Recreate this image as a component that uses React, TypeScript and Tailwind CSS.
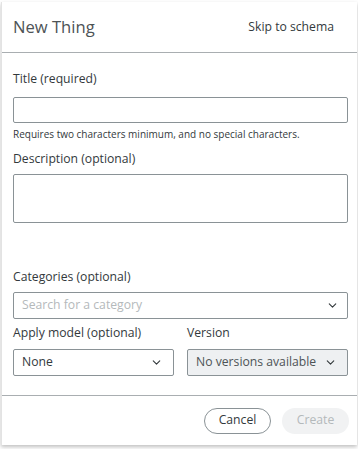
import { ChevronDown } from 'lucide-react';

const inputBox = 'w-full border border-[#8a9296] rounded-[2px] bg-white';

function Label({ children }: { children: React.ReactNode }) {
  return <div className="text-[12.2px] leading-[18px] text-[#33393c]">{children}</div>;
}

export default function App() {
  return (
    <div className="w-[358px] h-[449px] bg-white" style={{ fontFamily: '"Open Sans", "Noto Sans", sans-serif' }}>
      <div className="ml-[1px] mt-[2px] w-[356px] h-[443px] bg-white flex flex-col shadow-[0_2px_4px_rgba(0,0,0,0.25)] border-l border-[#e3e3e3]">
        <div className="h-[51px] flex items-center justify-between pl-[11px] pr-[23px] border-b border-[#a9aeb1]">
          <h1 className="text-[16.6px] text-[#4d5356]">New Thing</h1>
          <button className="text-[12.2px] text-[#33393c]">Skip to schema</button>
        </div>

        <div className="flex-1 pl-[11px] pr-[9px] pt-[17px]">
          <Label>Title (required)</Label>
          <div className={`${inputBox} h-[26px] mt-[9px]`} />
          <div className="text-[10px] leading-[14px] text-[#33393c] mt-[4px]">
            Requires two characters minimum, and no special characters.
          </div>

          <div className="mt-[9px]">
            <Label>Description (optional)</Label>
          </div>
          <div className={`${inputBox} h-[49px] mt-[6px]`} />

          <div className="mt-[45px]">
            <Label>Categories (optional)</Label>
          </div>
          <div className={`${inputBox} h-[27px] mt-[6px] flex items-center justify-between pl-[8px] pr-[8px]`}>
            <span className="text-[12.2px] text-[#b4b9bb]">Search for a category</span>
            <ChevronDown size={13} strokeWidth={2} className="text-[#33393c]" />
          </div>

          <div className="grid grid-cols-2 gap-[13px] mt-[5px]">
            <div>
              <Label>Apply model (optional)</Label>
              <div className={`${inputBox} h-[27px] mt-[7px] flex items-center justify-between pl-[8px] pr-[10px]`}>
                <span className="text-[12.2px] text-[#33393c]">None</span>
                <ChevronDown size={13} strokeWidth={2} className="text-[#33393c]" />
              </div>
            </div>
            <div>
              <Label>Version</Label>
              <div className="w-full border border-[#8a9296] rounded-[2px] bg-[#eef0f2] h-[27px] mt-[7px] flex items-center justify-between pl-[8px] pr-[10px]">
                <span className="text-[12.2px] text-[#4d5356] whitespace-nowrap">No versions available</span>
                <ChevronDown size={13} strokeWidth={2} className="text-[#33393c]" />
              </div>
            </div>
          </div>
        </div>

        <div className="h-[50px] border-t border-[#a9aeb1] flex items-center justify-end gap-[11px] pr-[8px]">
          <button className="h-[26px] w-[67px] rounded-full border border-[#8a9296] text-[12.2px] text-[#33393c] bg-white">
            Cancel
          </button>
          <button className="h-[26px] w-[67px] rounded-full bg-[#f1f2f3] text-[12.2px] text-[#b4b9bb]">Create</button>
        </div>
      </div>
    </div>
  );
}
